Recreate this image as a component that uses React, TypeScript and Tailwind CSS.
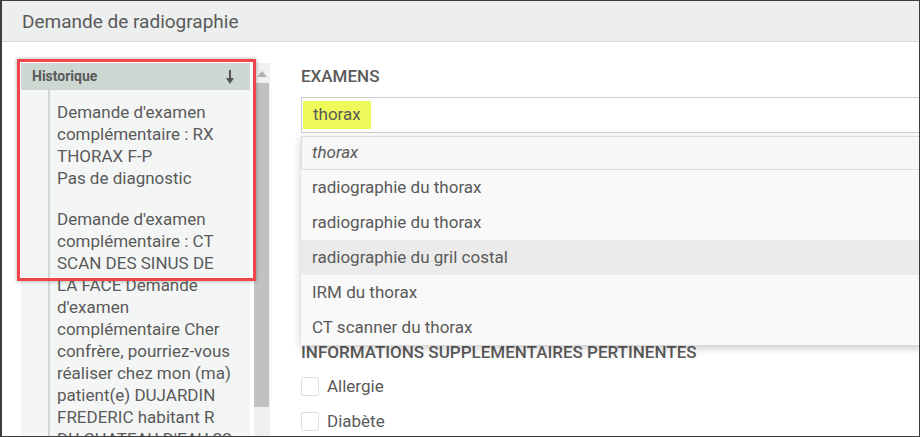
import React from "react";

const historyBlocks = [
  ["Demande d'examen", "complémentaire : RX", "THORAX F-P", "Pas de diagnostic"],
  [
    "Demande d'examen",
    "complémentaire : CT",
    "SCAN DES SINUS DE",
    "LA FACE Demande",
    "d'examen",
    "complémentaire Cher",
    "confrère, pourriez-vous",
    "réaliser chez mon (ma)",
    "patient(e) DUJARDIN",
    "FREDERIC habitant R",
    "DU CHATEAU D'EAU 22",
  ],
];

const suggestions = [
  "radiographie du thorax",
  "radiographie du thorax",
  "radiographie du gril costal",
  "IRM du thorax",
  "CT scanner du thorax",
];

const ArrowDown = () => (
  <svg width="8" height="14" viewBox="0 0 8 14" className="fill-[#555]">
    <rect x="3" y="0" width="2" height="9" />
    <polygon points="0,8 8,8 4,14" />
  </svg>
);

// ✅ Left column : history list with its scrollbar
const HistoryPanel = () => (
  <div className="relative flex h-full w-[249px] shrink-0">
    <div className="flex w-[229px] flex-col overflow-hidden bg-[#f4f6f5]">
      <div className="flex h-[27px] shrink-0 items-center justify-between bg-[#cdd8d2] pl-[11px] pr-[16px] text-[14px] font-bold">
        <span>Historique</span>
        <ArrowDown />
      </div>
      <div className="ml-[27px] flex-1 border-l-2 border-[#d0d9d5] pl-[7px] pt-[11px] text-[17px] leading-[22px]">
        {historyBlocks.map((lines, i) => (
          <div key={i} className={i > 0 ? "mt-[19px]" : ""}>
            {lines.map((line, j) => (
              <div key={j} className="whitespace-nowrap">
                {line}
              </div>
            ))}
          </div>
        ))}
      </div>
    </div>

    {/* Scrollbar */}
    <div className="ml-[4px] flex w-[16px] flex-col bg-[#f0f0f0]">
      <div className="flex h-[20px] shrink-0 items-start justify-center pt-[8px]">
        <div className="h-0 w-0 border-x-[5px] border-b-[6px] border-x-transparent border-b-[#b0b0b0]" />
      </div>
      <div className="h-[324px] w-[15px] bg-[#c1c1c1]" />
    </div>

    {/* Annotation frame */}
    <div className="pointer-events-none absolute left-[-4px] top-[-4px] h-[222px] w-[239px] border-[3px] border-[#f0454a] shadow-[0_0_4px_rgba(0,0,0,0.35)]" />
  </div>
);

const Checkbox = ({ label }: { label: string }) => (
  <label className="flex h-[19px] items-center gap-[8px] text-[17px]">
    <span className="h-[19px] w-[18px] rounded-[2px] border border-[#dedede] bg-white" />
    {label}
  </label>
);

// ✅ Right column : exam field with open suggestions
const ExamForm = () => (
  <div className="min-w-0 flex-1 pt-[3px]">
    <div className="text-[17px] font-medium leading-[20px]">EXAMENS</div>

    <div className="relative mt-[11px] w-[660px]">
      <div className="flex h-[36px] items-center border border-[#cccccc] bg-white px-[1px]">
        <span className="flex h-[28px] items-center bg-[#eefa5a] px-[10px] text-[17px]">thorax</span>
      </div>

      <div className="absolute left-0 top-[39px] z-10 w-full bg-[#f9f9f9] text-[17px] shadow-[0_3px_8px_rgba(0,0,0,0.22)]">
        <div className="flex h-[34px] items-center border border-[#dcdcdc] bg-[#f7f7f7] pl-[10px] italic">
          thorax
        </div>
        {suggestions.map((item, i) => (
          <div
            key={i}
            className={`flex h-[35px] items-center pl-[11px] ${i === 2 ? "bg-[#ebebeb]" : ""}`}
          >
            {item}
          </div>
        ))}
      </div>
    </div>

    <div className="mt-[209px] text-[17px] font-medium leading-[20px]">
      INFORMATIONS SUPPLEMENTAIRES PERTINENTES
    </div>
    <div className="mt-[15px] flex flex-col gap-[16px]">
      <Checkbox label="Allergie" />
      <Checkbox label="Diabète" />
    </div>
  </div>
);

export default function App() {
  return (
    <div className="flex h-[437px] w-[920px] flex-col overflow-hidden border border-l-2 border-[#3d3d3d] bg-white font-['Roboto',sans-serif] text-[#5a5a5a]">
      <header className="flex h-[41px] shrink-0 items-center border-b border-[#d5d9d7] bg-[#ecefee] pl-[20px] pt-[2px] text-[19px]">
        Demande de radiographie
      </header>
      <div className="flex min-h-0 flex-1 gap-[31px] pl-[19px] pt-[21px]">
        <HistoryPanel />
        <ExamForm />
      </div>
    </div>
  );
}
